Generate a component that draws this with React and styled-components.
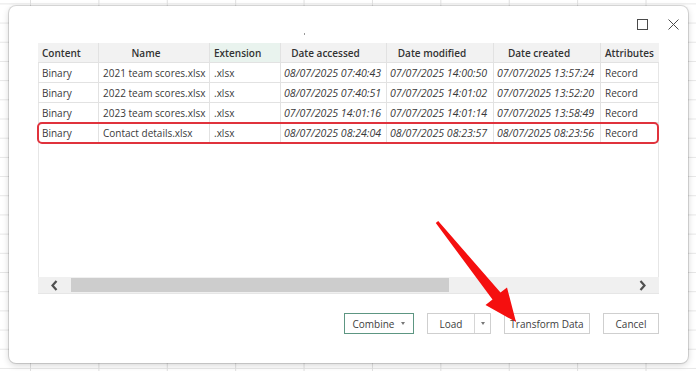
import React from 'react';
import styled, { createGlobalStyle } from 'styled-components';

const GlobalStyle = createGlobalStyle`
    html, body {
        margin: 0;
        padding: 0;
        background-color: #ffffff;
        background-image:
            linear-gradient(to right, #e0e0e0 1px, transparent 1px),
            linear-gradient(to bottom, #e6e6e6 1px, transparent 1px);
        background-size: 68.4px 19.2px;
        background-position: 30px 3.4px;
        font-family: "Open Sans", "Noto Sans", sans-serif;
    }
`;

const cols = '61px 111px 71px 106px 107px 107px 58px';

const Page = styled.div`
    position: relative;
    width: 696px;
    height: 371px;
    box-sizing: border-box;
    padding: 6px 8px 8px 9px;
`;

const Dialog = styled.div`
    width: 679px;
    height: 357px;
    box-sizing: border-box;
    background: #fff;
    border-radius: 7px;
    box-shadow: 0 0 0 1px rgba(0, 0, 0, 0.13), 0 2px 7px rgba(0, 0, 0, 0.18);
    padding: 0 29px;
    display: flex;
    flex-direction: column;
`;

const TitleBar = styled.div`
    height: 37px;
    display: flex;
    align-items: flex-start;
`;

const Dot = styled.span`
    width: 1px;
    height: 2px;
    background: #9a9a9a;
    margin: 27px 0 0 266px;
`;

const WinButtons = styled.div`
    margin-left: auto;
    margin-right: -24px;
    margin-top: 8px;
    display: flex;
    gap: 11px;
`;

const WinBtn = styled.button`
    width: 20px;
    height: 20px;
    padding: 0;
    border: none;
    background: transparent;
    display: flex;
    align-items: center;
    justify-content: center;
    color: #4a4a4a;
`;

const Table = styled.div`
    width: 621px;
    height: 251px;
    box-sizing: border-box;
    border-left: 1px solid #e6e6e6;
    border-right: 1px solid #e6e6e6;
    display: flex;
    flex-direction: column;
`;

const Row = styled.div`
    display: grid;
    grid-template-columns: ${cols};
    height: 20px;
    margin-left: -1px;
    position: relative;

    ${p => p.$highlight && `
        &::after {
            content: '';
            position: absolute;
            left: -1px;
            right: -1px;
            top: -1px;
            bottom: -1px;
            border: 2px solid #e0323c;
            border-radius: 5px;
        }
    `}
`;

const HeadCell = styled.div`
    box-sizing: border-box;
    background: ${p => (p.$selected ? '#e9f3ee' : '#f2f2f2')};
    border-right: 1px solid #e2e2e2;
    border-bottom: 1px solid #e2e2e2;
    font-size: 10px;
    font-weight: 600;
    color: #333;
    display: flex;
    align-items: center;
    justify-content: ${p => (p.$left ? 'flex-start' : 'center')};
    padding: ${p => (p.$left ? '0 0 0 4px' : '0 16px 0 0')};
    white-space: nowrap;

    &:last-child {
        border-right: none;
    }
`;

const Cell = styled.div`
    box-sizing: border-box;
    border-right: 1px solid #e2e2e2;
    border-bottom: 1px solid #e2e2e2;
    font-size: ${p => (p.$italic ? 10.6 : 10)}px;
    font-style: ${p => (p.$italic ? 'italic' : 'normal')};
    color: #3a3a3a;
    display: flex;
    align-items: center;
    padding: 0 0 0 ${p => (p.$italic ? 3 : 4)}px;
    white-space: nowrap;
    overflow: hidden;

    &:last-child {
        border-right: none;
    }
`;

const Empty = styled.div`
    flex: 1;
`;

const ScrollBar = styled.div`
    height: 16px;
    display: flex;
    background: #f0f0f0;
    border-bottom: 1px solid #e6e6e6;
    margin-left: -1px;
    margin-right: -1px;
`;

const ScrollArrow = styled.div`
    width: 33px;
    display: flex;
    align-items: center;
    justify-content: center;
    color: #505050;
`;

const Track = styled.div`
    flex: 1;
    display: flex;
    align-items: stretch;
    padding: 1px 0;
`;

const Thumb = styled.div`
    width: 378px;
    background: #cdcdcd;
`;

const Footer = styled.div`
    margin-top: 19px;
    display: flex;
    justify-content: flex-end;
    gap: 13px;
`;

const Button = styled.button`
    height: 21px;
    box-sizing: border-box;
    width: ${p => p.$w}px;
    padding: 0;
    background: #fff;
    border: 1px solid ${p => (p.$primary ? '#5d9682' : '#cfcfcf')};
    font-family: "Open Sans", "Noto Sans", sans-serif;
    font-size: 10px;
    color: #3d3d3d;
    display: flex;
    align-items: center;
    justify-content: center;
    gap: 7px;
`;

const SplitButton = styled.div`
    display: flex;
    height: 21px;
    box-sizing: border-box;
    border: 1px solid #cfcfcf;
    background: #fff;
    font-size: 10px;
    color: #3d3d3d;
`;

const SplitMain = styled.div`
    width: 46px;
    display: flex;
    align-items: center;
    justify-content: center;
    border-right: 1px solid #d6d6d6;
`;

const SplitDrop = styled.div`
    width: 15px;
    display: flex;
    align-items: center;
    justify-content: center;
`;

const Caret = styled.span`
    width: 0;
    height: 0;
    border-left: 2.5px solid transparent;
    border-right: 2.5px solid transparent;
    border-top: 3px solid #777;
`;

const Arrow = styled.svg`
    position: absolute;
    left: 0;
    top: 0;
    pointer-events: none;
`;

const headers = [
    { label: 'Content', left: true },
    { label: 'Name' },
    { label: 'Extension', left: true, selected: true },
    { label: 'Date accessed' },
    { label: 'Date modified' },
    { label: 'Date created' },
    { label: 'Attributes', left: true },
];

const rows = [
    ['2021 team scores.xlsx', '08/07/2025 07:40:43', '07/07/2025 14:00:50', '07/07/2025 13:57:24'],
    ['2022 team scores.xlsx', '08/07/2025 07:40:51', '07/07/2025 14:01:02', '07/07/2025 13:52:20'],
    ['2023 team scores.xlsx', '07/07/2025 14:01:16', '07/07/2025 14:01:14', '07/07/2025 13:58:49'],
    ['Contact details.xlsx', '08/07/2025 08:24:04', '08/07/2025 08:23:57', '08/07/2025 08:23:56'],
];

const App = () => {
    return (
        <>
            <GlobalStyle />
            <Page>
                <Dialog>
                    <TitleBar>
                        <Dot />
                        <WinButtons>
                            <WinBtn>
                                <svg width="11" height="11" viewBox="0 0 11 11">
                                    <rect x="0.5" y="0.5" width="10" height="10" fill="none" stroke="currentColor" strokeWidth="1" />
                                </svg>
                            </WinBtn>
                            <WinBtn>
                                <svg width="11" height="11" viewBox="0 0 11 11">
                                    <path d="M0.5 0.5 L10.5 10.5 M10.5 0.5 L0.5 10.5" stroke="currentColor" strokeWidth="1" />
                                </svg>
                            </WinBtn>
                        </WinButtons>
                    </TitleBar>

                    <Table>
                        <Row>
                            {headers.map(h => (
                                <HeadCell key={h.label} $left={h.left} $selected={h.selected}>
                                    {h.label}
                                </HeadCell>
                            ))}
                        </Row>
                        {rows.map((r, i) => (
                            <Row key={r[0]} $highlight={i === rows.length - 1}>
                                <Cell>Binary</Cell>
                                <Cell>{r[0]}</Cell>
                                <Cell>.xlsx</Cell>
                                <Cell $italic>{r[1]}</Cell>
                                <Cell $italic>{r[2]}</Cell>
                                <Cell $italic>{r[3]}</Cell>
                                <Cell>Record</Cell>
                            </Row>
                        ))}
                        <Empty />
                        <ScrollBar>
                            <ScrollArrow>
                                <svg width="9" height="11" viewBox="0 0 9 11">
                                    <path d="M6.5 1 L2.5 5.5 L6.5 10" fill="none" stroke="currentColor" strokeWidth="2.2" />
                                </svg>
                            </ScrollArrow>
                            <Track>
                                <Thumb />
                            </Track>
                            <ScrollArrow>
                                <svg width="9" height="11" viewBox="0 0 9 11">
                                    <path d="M2.5 1 L6.5 5.5 L2.5 10" fill="none" stroke="currentColor" strokeWidth="2.2" />
                                </svg>
                            </ScrollArrow>
                        </ScrollBar>
                    </Table>

                    <Footer>
                        <Button $primary $w={70}>
                            Combine <Caret />
                        </Button>
                        <SplitButton>
                            <SplitMain>Load</SplitMain>
                            <SplitDrop><Caret /></SplitDrop>
                        </SplitButton>
                        <Button $w={86}>Transform Data</Button>
                        <Button $w={56}>Cancel</Button>
                    </Footer>
                </Dialog>

                <Arrow width="696" height="371" viewBox="0 0 696 371">
                    <polygon
                        points="435.8,223 438.2,221 500.5,292.5 507,287.5 516,322 485.5,305 492.5,299.5"
                        fill="#f50f0f"
                    />
                </Arrow>
            </Page>
        </>
    );
};

export default App;
